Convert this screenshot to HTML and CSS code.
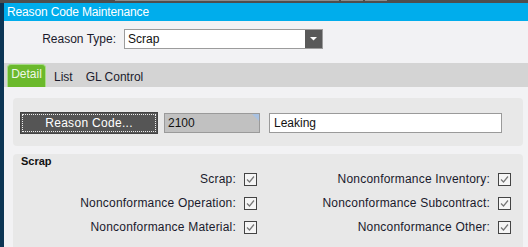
FILE: index.html
```html
<!DOCTYPE html>
<html>
<head>
<meta charset="utf-8">
<link rel="stylesheet" href="styles.css">
</head>
<body>
<div class="strip">
  <span class="seg s1"></span><span class="seg s2"></span><span class="seg s3"></span>
</div>
<div class="app">
  <div class="edge"></div>
  <div class="main">
    <div class="titlebar">Reason Code Maintenance</div>
    <div class="typerow">
      <label class="typelabel">Reason Type:</label>
      <div class="combo">
        <div class="combofield">Scrap</div>
        <div class="combobtn"><svg width="7" height="4" viewBox="0 0 7 4"><polygon points="0,0 7,0 3.5,3.5" fill="#fff"/></svg></div>
      </div>
    </div>
    <div class="tabbar">
      <div class="tab active">Detail</div>
      <div class="tab">List</div>
      <div class="tab">GL Control</div>
    </div>
    <div class="panel panel1">
      <button class="rcbtn"><span class="rcinner">Reason Code...</span></button>
      <div class="codefield">2100<span class="corner"></span></div>
      <div class="descfield">Leaking</div>
    </div>
    <div class="panel panel2">
      <div class="grouptitle">Scrap</div>
      <div class="checks">
        <div class="cell"><span>Scrap:</span><span class="cb"></span></div>
        <div class="cell"><span>Nonconformance Inventory:</span><span class="cb"></span></div>
        <div class="cell"><span>Nonconformance Operation:</span><span class="cb"></span></div>
        <div class="cell"><span>Nonconformance Subcontract:</span><span class="cb"></span></div>
        <div class="cell"><span>Nonconformance Material:</span><span class="cb"></span></div>
        <div class="cell"><span>Nonconformance Other:</span><span class="cb"></span></div>
      </div>
    </div>
  </div>
</div>
</body>
</html>
```
FILE: styles.css
```css
html, body {
  margin: 0;
  padding: 0;
}
body {
  width: 528px;
  height: 247px;
  overflow: hidden;
  background: #f2f2f4;
  font-family: "Liberation Sans", Arial, sans-serif;
  font-size: 12px;
  color: #1a1a2c;
}
.strip {
  height: 3px;
  background: #4e4e4e;
  display: flex;
  align-items: flex-start;
}
.seg {
  height: 1px;
  background: #8c8c8c;
}
.s1 { margin-left: 115px; width: 224px; }
.s2 { margin-left: 2px; width: 22px; }
.s3 { margin-left: 2px; width: 22px; }
.app {
  display: flex;
  height: 244px;
}
.edge {
  width: 4px;
  background: #0c3554;
  flex: none;
}
.main {
  flex: 1;
  display: flex;
  flex-direction: column;
}
.titlebar {
  height: 18px;
  line-height: 18px;
  background: #00adec;
  color: #fff;
  padding-left: 3px;
  font-size: 12px;
  letter-spacing: -0.15px;
}
.typerow {
  display: flex;
  align-items: center;
  margin-top: 8px;
  height: 20px;
}
.typelabel {
  width: 112px;
  text-align: right;
  margin-right: 8px;
}
.combo {
  display: flex;
  width: 199px;
  height: 20px;
  box-sizing: border-box;
  border: 1px solid #9c9c9c;
  background: #fff;
}
.combofield {
  flex: 1;
  line-height: 18px;
  padding-left: 3px;
  color: #111;
}
.combobtn {
  width: 17px;
  background: #595959;
  display: flex;
  align-items: center;
  justify-content: center;
}
.tabbar {
  margin-top: 14px;
  height: 24px;
  background: #d4d4d4;
  display: flex;
  align-items: flex-end;
  padding-left: 3px;
}
.tab {
  height: 23px;
  box-sizing: border-box;
  padding: 6px 8px 0 0;
  margin-left: 8px;
}
.tab.active {
  margin-left: 0;
  margin-right: 0;
  padding: 2px 0 0 0;
  width: 39px;
  text-align: center;
  background: #6bb92c;
  border: 1px solid #a8dc88;
  border-bottom: none;
  border-radius: 4px 4px 0 0;
  color: #eef8e6;
}
.tab:nth-child(3) { margin-left: 5px; }
.panel {
  background: #e8e8e8;
  margin-left: 9px;
  margin-right: 5px;
  border-radius: 4px;
}
.panel1 {
  margin-top: 11px;
  height: 48px;
  box-sizing: border-box;
  padding: 14px 0 0 7px;
  display: flex;
  align-items: flex-start;
}
.rcbtn {
  width: 138px;
  height: 22px;
  padding: 1px;
  margin: 0;
  background: #555;
  border: 1px solid #444;
  box-sizing: border-box;
  font-family: inherit;
  font-size: 12px;
  color: #fff;
  display: flex;
}
.rcinner {
  flex: 1;
  border: 1px dotted #eee;
  display: flex;
  align-items: center;
  justify-content: center;
  letter-spacing: 0.3px;
}
.codefield {
  position: relative;
  margin: 1px 0 0 6px;
  width: 96px;
  height: 20px;
  box-sizing: border-box;
  border: 1px solid #9a9a9a;
  background: #c1c1c1;
  line-height: 18px;
  padding-left: 3px;
  color: #111;
}
.corner {
  position: absolute;
  right: 0;
  top: 0;
  width: 0;
  height: 0;
  border-top: 7px solid #a9c2e2;
  border-left: 7px solid transparent;
}
.descfield {
  margin: 1px 0 0 9px;
  width: 233px;
  height: 20px;
  box-sizing: border-box;
  border: 1px solid #9a9a9a;
  background: #fff;
  line-height: 18px;
  padding-left: 4px;
  color: #111;
}
.panel2 {
  margin-top: 8px;
  flex: 1;
  padding-left: 8px;
  border-radius: 4px 4px 0 0;
}
.grouptitle {
  font-weight: bold;
  font-size: 11px;
  line-height: 12px;
  padding-top: 1px;
  color: #111;
}
.checks {
  display: grid;
  grid-template-columns: 236px 254px;
  grid-auto-rows: 24px;
}
.cell {
  display: flex;
  align-items: center;
  justify-content: flex-end;
  gap: 8px;
  letter-spacing: 0.2px;
}
.cb {
  width: 13px;
  height: 13px;
  box-sizing: border-box;
  border: 1px solid #444;
  background: #f5f5f5 url("data:image/svg+xml;utf8,<svg xmlns='http://www.w3.org/2000/svg' width='11' height='11' viewBox='0 0 11 11'><path d='M2 5.5 L4.5 8 L9 2.5' fill='none' stroke='%23777' stroke-width='1.2'/></svg>") no-repeat center;
}
```
